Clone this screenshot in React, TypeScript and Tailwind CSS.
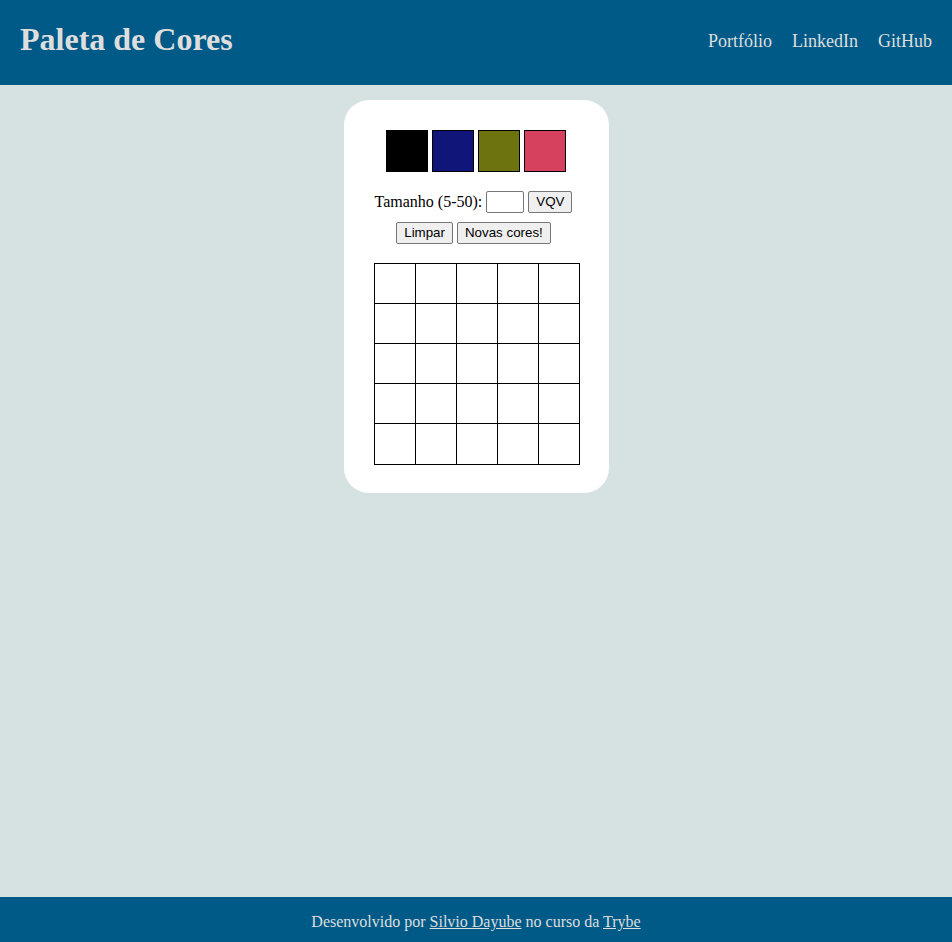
import React from "react";

const serif = { fontFamily: '"Liberation Serif", "Times New Roman", serif' };

export default function App() {
  const colors = ["#000000", "#10157a", "#6c730f", "#d6425d"];
  const cells = Array.from({ length: 25 });
  const btn =
    "h-[22px] px-[7px] border border-[#767676] rounded-[2px] bg-[#efefef] text-[13.33px] font-['Liberation_Sans',Arial,sans-serif] leading-none text-black";
  return (
    <div className="min-h-screen flex flex-col bg-[#d6e2e2]" style={serif}>
      <header className="h-[85px] bg-[#005a88] flex items-center justify-between px-[20px] text-[#dedede]">
        <h1 className="text-[32px] font-bold leading-none -mt-[8px]">Paleta de Cores</h1>
        <nav className="flex gap-[20px] text-[18px] -mt-[3px]">
          <a href="#">Portfólio</a>
          <a href="#">LinkedIn</a>
          <a href="#">GitHub</a>
        </nav>
      </header>
      <main className="flex-1 flex justify-center items-start">
        <div className="mt-[15px] bg-white rounded-[25px] pl-[30px] pr-[29px] pt-[30px] pb-[28px] w-[265px] flex flex-col items-center">
          <div className="flex gap-[4px] mr-[2px]">
            {colors.map((c) => (
              <div key={c} className="w-[42px] h-[42px] border border-black" style={{ backgroundColor: c }} />
            ))}
          </div>
          <div className="mt-[19px] mr-[6px] h-[22px] flex items-center gap-[4px] text-[16px] text-black">
            <span>Tamanho (5-50):</span>
            <input className="w-[38px] h-[22px] border border-[#767676] rounded-[2px] bg-white" />
            <button className={btn}>VQV</button>
          </div>
          <div className="mt-[9px] mr-[6px] h-[22px] flex items-center gap-[4px]">
            <button className={btn}>Limpar</button>
            <button className={btn}>Novas cores!</button>
          </div>
          <div className="mt-[19px] grid grid-cols-[repeat(5,41px)] grid-rows-[40px_40px_40px_40px_41px] border-l border-t border-black w-[206px]">
            {cells.map((_, i) => (
              <div key={i} className="border-r border-b border-black bg-white" />
            ))}
          </div>
        </div>
      </main>
      <footer className="h-[45px] bg-[#005a88] flex items-center justify-center text-[16px] text-[#dedede]">
        <p className="mt-[5px]">
          Desenvolvido por <a href="#" className="underline">Silvio Dayube</a> no curso da{" "}
          <a href="#" className="underline">Trybe</a>
        </p>
      </footer>
    </div>
  );
}
